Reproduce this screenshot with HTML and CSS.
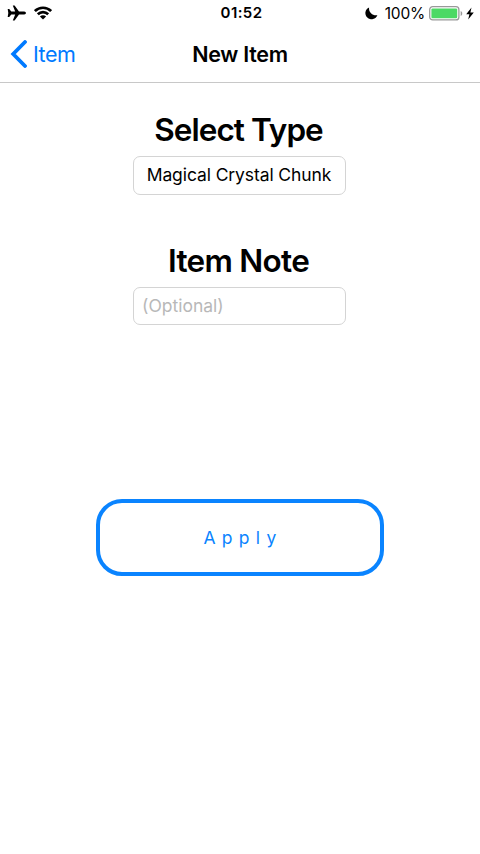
FILE: index.html
```html
<!DOCTYPE html>
<html lang="en">
<head>
<meta charset="utf-8">
<title>New Item</title>
<link rel="stylesheet" href="styles.css">
</head>
<body>
<header class="top">
  <div class="status">
    <div class="status-left">
      <svg class="plane" width="19" height="16" viewBox="0 0 19 16"><path d="M17.2 6.5H12L7.6.5H5.8L8.2 6.5H4.3L2.2 4H.7L1.3 8 .7 12H2.2L4.3 9.4H8.2L5.8 15.6H7.6L12 9.4H17.2C19.5 9.1 19.5 6.8 17.2 6.5Z"/></svg>
      <svg class="wifi" width="18" height="14" viewBox="0 0 18 14"><g fill="none" stroke="#000" stroke-width="2.7"><path d="M.9 5.1C5.4.6 12.6.6 17.1 5.1"/><path d="M3.8 8.3C6.8 5.4 11.2 5.4 14.2 8.3"/></g><path d="M5.9 10.5C7.7 8.9 10.3 8.9 12.1 10.5L9 13.5Z"/></svg>
    </div>
    <span class="time">01:52</span>
    <div class="status-right">
      <svg class="moon" width="13" height="13" viewBox="0 0 13 13"><path d="M4.1.4C3.4 5.1 7.6 9.1 12.4 8.2A6.2 6.2 0 1 1 4.1.4Z"/></svg>
      <span class="percent">100%</span>
      <svg class="battery" width="34" height="15" viewBox="0 0 34 15"><rect x=".7" y=".7" width="29.2" height="13.2" rx="3" fill="#fff" stroke="#999" stroke-width="1.3"/><rect x="2.4" y="2.4" width="25.8" height="9.8" rx="1.2" fill="#4cd964"/><path d="M31.7 5C33.8 5.7 33.8 9.3 31.7 10Z" fill="#999"/></svg>
      <svg class="bolt" width="8" height="13" viewBox="0 0 8 13"><path d="M5.5.4.2 7.2H3.4L2.2 12.5 7.8 5.4H4.4Z"/></svg>
    </div>
  </div>
  <nav class="nav">
    <a class="back"><svg width="17" height="28" viewBox="0 0 17 28"><path d="M15 2 3.2 14 15 26" fill="none" stroke="#007aff" stroke-width="3.8" stroke-linecap="round"/></svg><span>Item</span></a>
    <h1 class="title">New Item</h1>
  </nav>
</header>
<main class="form">
  <section class="group">
    <h2 class="label">Select Type</h2>
    <div class="field select">Magical Crystal Chunk</div>
  </section>
  <section class="group">
    <h2 class="label note">Item Note</h2>
    <input class="field" type="text" placeholder="(Optional)">
  </section>
  <button class="apply">Apply</button>
</main>
</body>
</html>
```
FILE: styles.css
```css
* { box-sizing: border-box; }
body { margin: 0; height: 854px; background: #fff; color: #000; font-family: Inter, "Liberation Sans", sans-serif; overflow: hidden; }
svg { display: block; flex: none; }
.top { height: 83px; border-bottom: 1px solid #c8c8c8; }
.status { height: 26px; display: grid; grid-template-columns: 1fr auto 1fr; align-items: center; padding: 0 6px 0 7px; }
.status-left, .status-right { display: flex; align-items: center; }
.status-right { justify-content: flex-end; }
.wifi { margin-left: 8px; }
.time { font-size: 15px; font-weight: 600; letter-spacing: 0.4px; padding-left: 2px; line-height: 18px; }
.percent { font-size: 15.5px; margin: 0 4px 0 7px; letter-spacing: -0.2px; }
.bolt { margin-left: 3px; }
.nav { height: 56px; display: grid; grid-template-columns: 1fr auto 1fr; align-items: center; padding: 0 0 0 10px; margin-right: 10px; }
.back { display: flex; align-items: center; gap: 6px; color: #007aff; font-size: 21.5px; letter-spacing: -0.5px; }
.title { margin: 0; font-size: 21.5px; line-height: 28px; font-weight: 600; letter-spacing: -0.3px; }
.form { display: flex; flex-direction: column; align-items: center; padding: 27px 1px 0 0; }
.group { width: 213px; height: 131px; display: flex; flex-direction: column; align-items: center; }
.label { margin: 0 0 6px; padding-right: 2px; font-size: 31.5px; line-height: 40px; font-weight: 600; letter-spacing: -0.95px; white-space: nowrap; }
.note { letter-spacing: -0.7px; }
.field { width: 213px; height: 39px; border: 1px solid #d4d4d4; border-radius: 7px; background: #fff; padding: 0 9px; font: 17.5px/36px Inter, "Liberation Sans", sans-serif; outline: none; }
input.field { height: 38px; padding: 0 8px 1px; }
.field::placeholder { color: #b8b8b8; opacity: 1; }
.select { text-align: center; padding: 0 1px 0 0; white-space: nowrap; letter-spacing: -0.1px; }
.apply { width: 288px; height: 77px; margin: 127px -1px 0 0; padding: 0 0 0 6px; border: 4px solid #0a84ff; border-radius: 26px; background: #fff; color: #0a84ff; font: 17.5px Inter, "Liberation Sans", sans-serif; letter-spacing: 6.3px; }
```
